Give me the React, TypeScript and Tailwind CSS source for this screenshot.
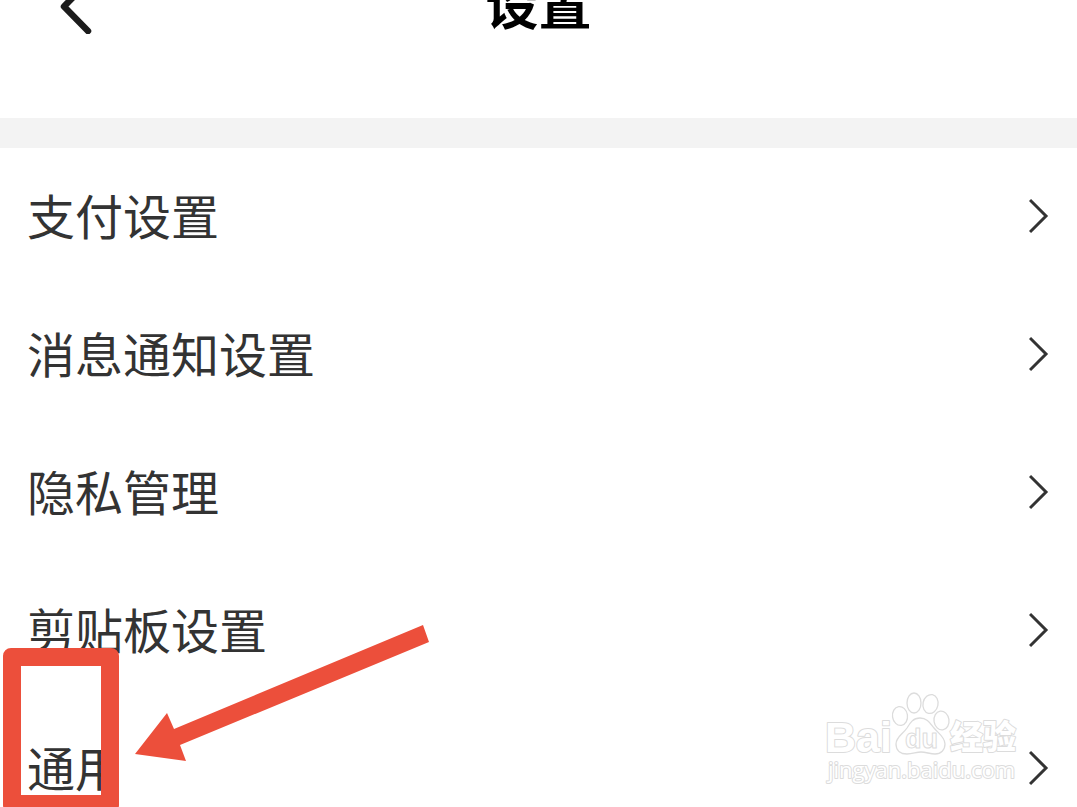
interface SettingItem {
  label: string
  href: string
}

const items: SettingItem[] = [
  { label: "支付设置", href: "#payment" },
  { label: "消息通知设置", href: "#notifications" },
  { label: "隐私管理", href: "#privacy" },
  { label: "剪贴板设置", href: "#clipboard" },
  { label: "通用", href: "#general" },
]

function BackIcon() {
  return (
    <svg
      width="36"
      height="64"
      viewBox="0 0 36 64"
      fill="none"
      stroke="#1c1c1c"
      strokeWidth="6.5"
      strokeLinecap="round"
      strokeLinejoin="round"
      aria-hidden="true"
    >
      <path d="M28 12L4 36.500L28 61" />
    </svg>
  )
}

function ChevronIcon() {
  return (
    <svg width="20" height="36" viewBox="0 0 20 36" fill="none" stroke="#333" strokeWidth="3" aria-hidden="true">
      <path d="M1 2L17 18L1 34" />
    </svg>
  )
}

function Arrow() {
  return (
    <svg
      className="pointer-events-none absolute -top-[77px] left-[134px]"
      width="298"
      height="140"
      viewBox="0 0 298 140"
      fill="#ec4f3b"
      aria-hidden="true"
    >
      <path d="M1 131L33 90L40 106L289 2L295 19L46 122L52 138Z" />
    </svg>
  )
}

function Watermark() {
  return (
    <svg
      className="pointer-events-none absolute -top-2 right-[57px]"
      width="198"
      height="96"
      viewBox="0 0 198 96"
      fill="#fff"
      stroke="#dcdcdc"
      strokeWidth="2"
      strokeLinejoin="round"
      fontFamily='"Liberation Sans", "Noto Sans CJK SC", sans-serif'
      aria-hidden="true"
    >
      <g paintOrder="stroke">
        <text x="3" y="60" fontSize="43" fontWeight="700">
          Bai
        </text>
        <text x="128" y="57" fontSize="33" fontWeight="900">
          经验
        </text>
        <text x="6" y="86" fontSize="22" fontFamily='"Open Sans", sans-serif'>
          jingyan.baidu.com
        </text>
      </g>
      <g strokeWidth="1.3">
        <ellipse cx="78" cy="24" rx="7.5" ry="9.5" transform="rotate(-8 78 24)" />
        <ellipse cx="92" cy="11" rx="7" ry="10" />
        <ellipse cx="108.500" cy="12" rx="7.5" ry="9.5" transform="rotate(12 108.5 12)" />
        <ellipse cx="119.500" cy="28.500" rx="7.5" ry="9.5" transform="rotate(-8 119.5 28.5)" />
        <path d="M98 26C91 26 88 31 85 36C81 42 74 45 74 52C74 59 79 62 85 62C91 62 94 60 99 60C104 60 108 62 113 62C119 62 123 58 123 52C123 45 116 41 112 36C108 31 105 26 98 26Z" />
      </g>
      <text x="83" y="56" fontSize="27" fontWeight="700" strokeWidth="1">
        du
      </text>
    </svg>
  )
}

export default function App() {
  return (
    <div className="h-screen overflow-hidden bg-white font-['Noto_Sans_CJK_SC',sans-serif]">
      <header className="-mt-[106px] grid h-56 grid-cols-[1fr_auto_1fr] items-center px-[60px] pb-2">
        <button type="button" aria-label="返回" className="justify-self-start">
          <BackIcon />
        </button>
        <h1 className="text-[53px] leading-none font-bold text-black">设置</h1>
      </header>

      <main className="relative border-t-[30px] border-[#f3f3f3]">
        <ul>
          {items.map((item) => (
            <li key={item.href}>
              <a href={item.href} className="flex h-[138px] items-center justify-between pr-7 pb-0.5 pl-[27px] text-[#333]">
                <span className="pb-1 text-5xl leading-none">{item.label}</span>
                <ChevronIcon />
              </a>
            </li>
          ))}
        </ul>

        <div className="absolute inset-x-0 bottom-0 h-[138px]">
          <div className="pointer-events-none absolute -top-[52px] left-[3px] h-[165px] w-[116px] rounded-lg border-[18px] border-[#ec4f3b]" />
          <Arrow />
          <Watermark />
        </div>
      </main>
    </div>
  )
}
